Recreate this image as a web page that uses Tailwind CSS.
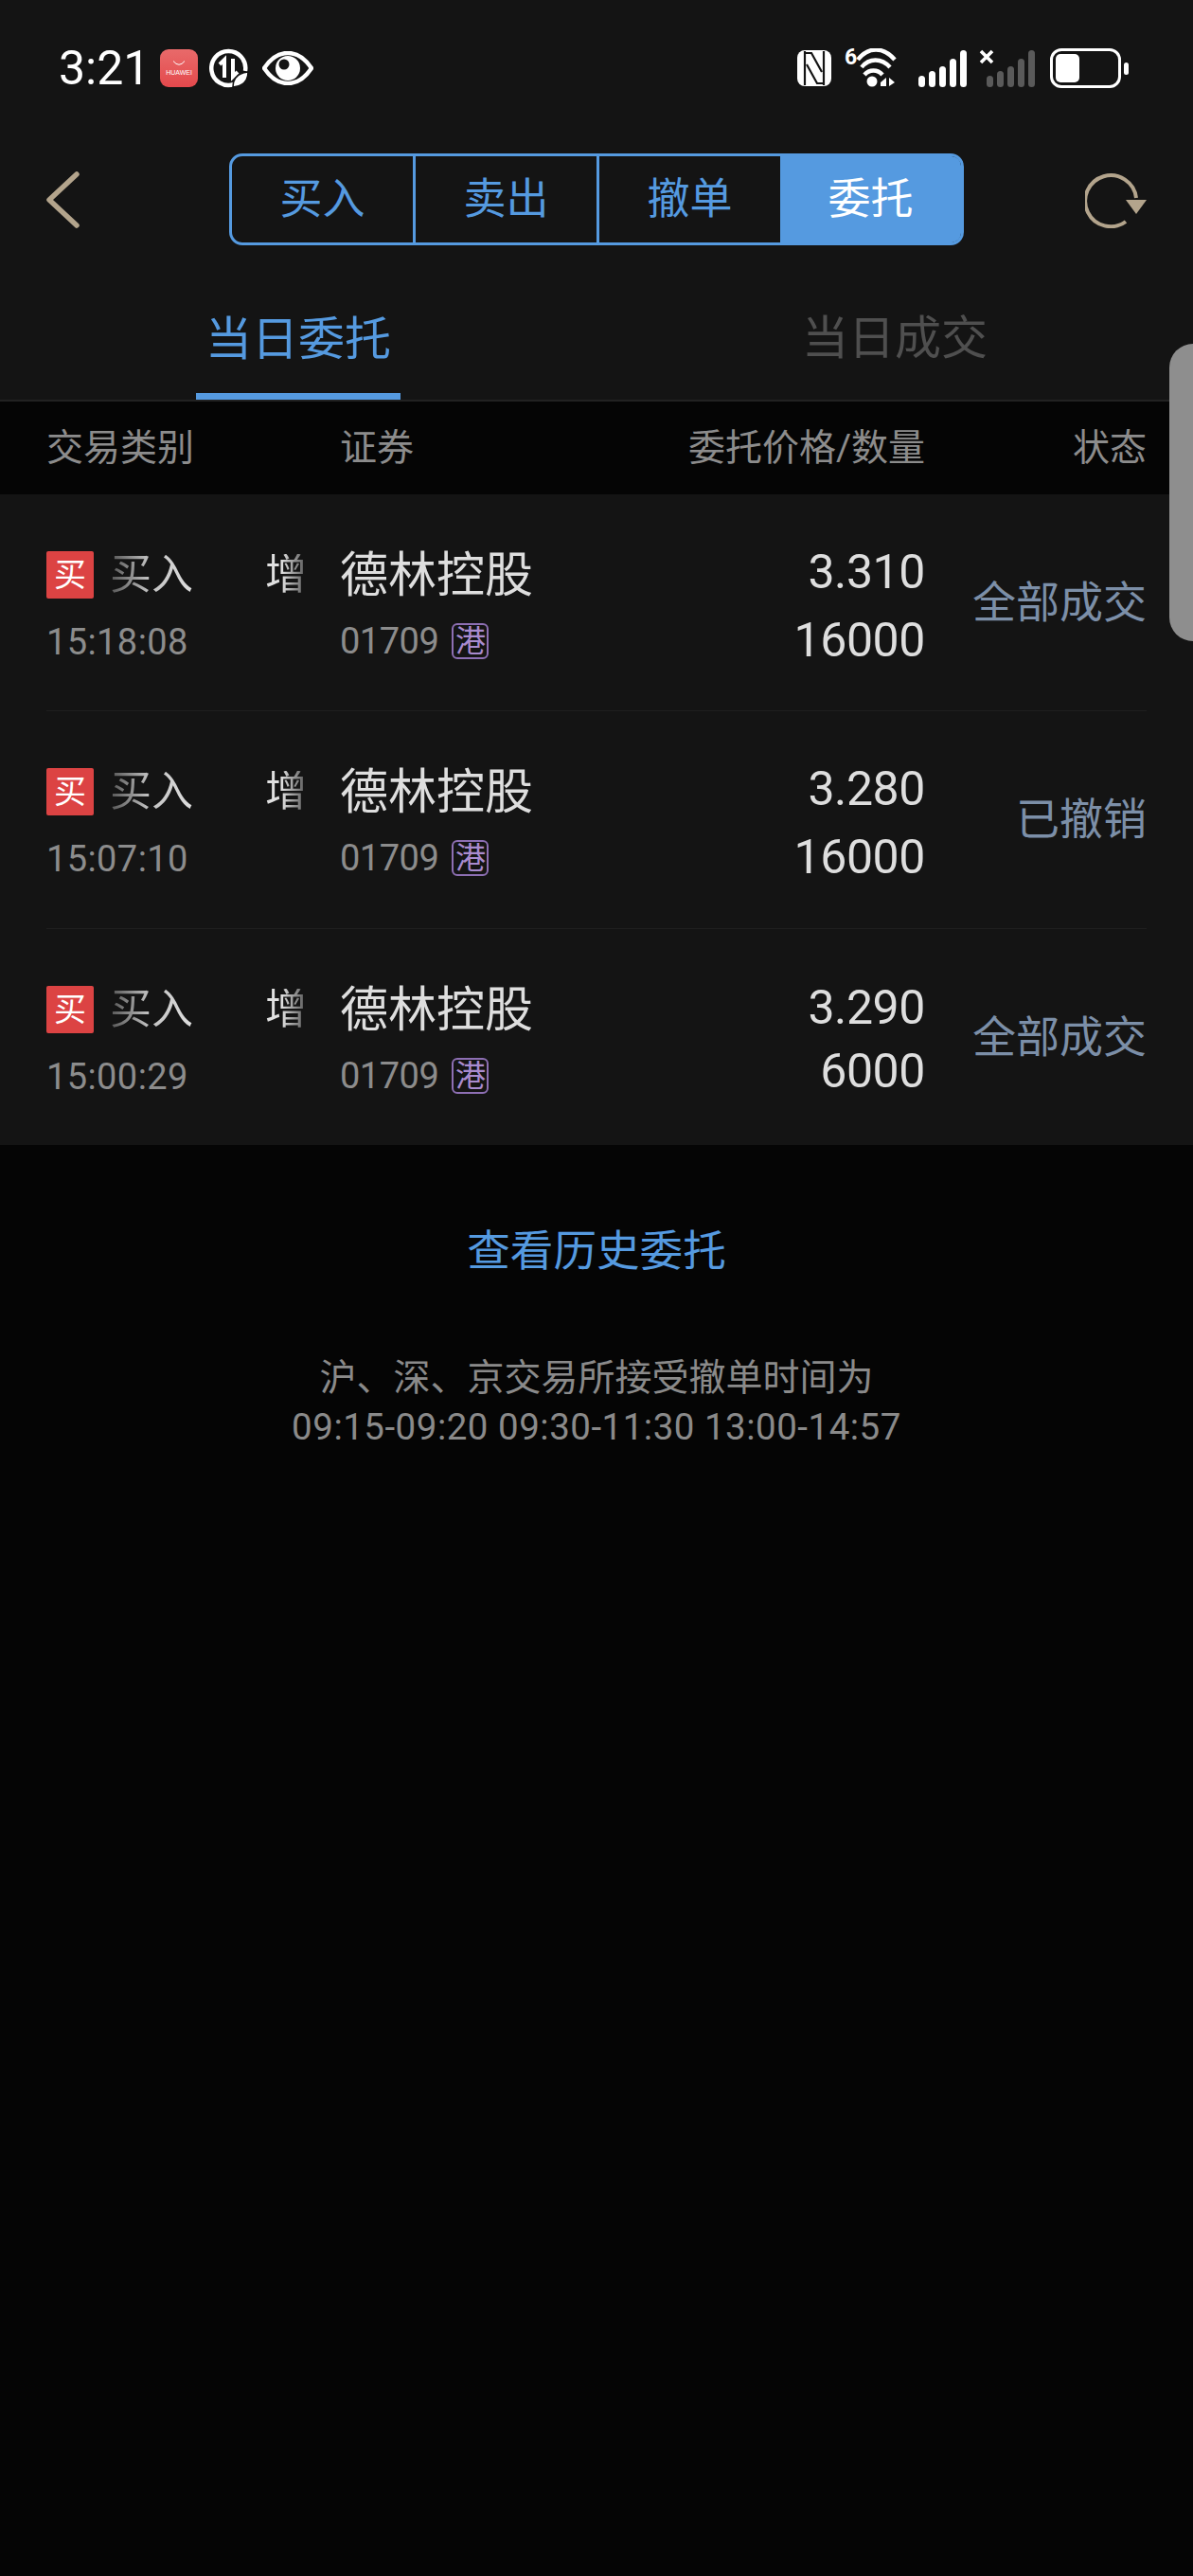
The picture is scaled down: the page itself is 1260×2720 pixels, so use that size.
<!DOCTYPE html>
<html>
  <head>
    <title>委托</title>
    <meta charset="utf-8" />
    <script src="https://cdn.jsdelivr.net/npm/@tailwindcss/browser@4"></script>
  </head>
  <body class="bg-[#050505] font-['Roboto','Noto_Sans_CJK_SC',sans-serif]">
    <div class="relative w-[1260px] h-[2720px] overflow-hidden">
      <!-- status bar -->
      <div class="h-[140px] bg-[#141414] flex items-center justify-between pt-[4px] pl-[62px] pr-[68px] text-white">
        <div class="flex items-center">
          <span class="text-[50px] leading-none w-[91px]">3:21</span>
          <div class="ml-[16px] w-[40px] h-[40px] rounded-[9px] bg-gradient-to-b from-[#e86a6a] to-[#e4484c] flex flex-col items-center justify-center">
            <svg width="14" height="6" viewBox="0 0 14 6" class="mb-[3px]"><path d="M1 0.5 Q7 8 13 0.5" stroke="#fff" stroke-width="1" fill="none"/></svg>
            <span class="text-[7px] leading-none font-['Liberation_Sans']">HUAWEI</span>
          </div>
          <svg class="ml-[12px]" width="42" height="42" viewBox="0 0 42 42" fill="none" stroke="#fff">
            <path d="M26 38 A18 18 0 1 1 38 24" stroke-width="4.5"/>
            <path d="M16 31 V12 L11 17" stroke-width="4"/>
            <path d="M25 11 V30 L30 25" stroke-width="4"/>
            <path d="M25 41 C25 30 32 26 41 25 C41 34 36 40 25 41 Z" fill="#fff" stroke="#141414" stroke-width="1.5"/>
          </svg>
          <svg class="ml-[14px]" width="54" height="36" viewBox="0 0 54 36">
            <path d="M2 18 C10 6 18 2 27 2 C36 2 44 6 52 18 C44 30 36 34 27 34 C18 34 10 30 2 18 Z" fill="none" stroke="#fff" stroke-width="4.5"/>
            <circle cx="27" cy="18" r="13" fill="#fff"/>
            <circle cx="23" cy="14" r="5.5" fill="#141414"/>
          </svg>
        </div>
        <div class="flex items-center">
          <svg width="36" height="38" viewBox="0 0 36 38">
            <rect x="0" y="0" width="36" height="38" rx="8" fill="#fff"/>
            <path d="M8 1 V37 M28 1 V37" stroke="#141414" stroke-width="2.2"/>
            <path d="M8 3 H15 L26 23 M28 35 H21 L10 15" fill="none" stroke="#141414" stroke-width="2.2"/>
          </svg>
          <div class="relative ml-[14px] w-[56px] h-[42px]">
            <span class="absolute left-0 top-0 text-[23px] leading-[20px] font-bold">6</span>
            <svg width="56" height="42" viewBox="0 0 56 42" fill="none" stroke="#fff">
              <path d="M14 12 C25 -2 41 -2 53 12" stroke-width="4.4"/>
              <path d="M18 20 C26 10 39 10 48 20" stroke-width="4.4"/>
              <path d="M21 28 C26 22 35 22 40 28" stroke-width="4.4"/>
              <circle cx="29" cy="35" r="5.5" fill="#fff" stroke="none"/>
              <path d="M38 36 L44 31 V40 H38 Z M47 31 L53 36 L47 40 Z" fill="#fff" stroke="none"/>
            </svg>
          </div>
          <div class="ml-[22px] flex items-end gap-[4px] h-[40px]">
            <div class="w-[7px] h-[12px] rounded-full bg-white"></div>
            <div class="w-[7px] h-[17px] rounded-full bg-white"></div>
            <div class="w-[7px] h-[22px] rounded-full bg-white"></div>
            <div class="w-[7px] h-[30px] rounded-full bg-white"></div>
            <div class="w-[7px] h-[39px] rounded-full bg-white"></div>
          </div>
          <div class="relative ml-[21px] flex items-end gap-[4px] h-[40px]">
            <svg class="absolute left-[-8px] top-[0px]" width="16" height="16" viewBox="0 0 16 16"><path d="M2 2 L14 14 M14 2 L2 14" stroke="#fff" stroke-width="3.6"/></svg>
            <div class="w-[7px] h-[12px] rounded-full bg-[#5a5a5a]"></div>
            <div class="w-[7px] h-[17px] rounded-full bg-[#5a5a5a]"></div>
            <div class="w-[7px] h-[22px] rounded-full bg-[#5a5a5a]"></div>
            <div class="w-[7px] h-[30px] rounded-full bg-[#5a5a5a]"></div>
            <div class="w-[7px] h-[39px] rounded-full bg-[#5a5a5a]"></div>
          </div>
          <div class="ml-[16px] w-[75px] h-[42px] rounded-[12px] border-[3px] border-white p-[3px]">
            <div class="w-[25px] h-full rounded-[5px] bg-white"></div>
          </div>
          <div class="ml-[3px] w-[5px] h-[13px] rounded-full bg-white"></div>
        </div>
      </div>

      <!-- nav: back, segmented control, refresh -->
      <div class="h-[140px] bg-[#141414] flex items-start justify-between px-[48px] pt-[22px]">
        <div class="w-[66px] mt-[19px]">
          <svg width="36" height="60" viewBox="0 0 36 60" fill="none"><path d="M33 3 L4 30 L33 57" stroke="#b3a48c" stroke-width="5.5" stroke-linecap="round" stroke-linejoin="round"/></svg>
        </div>
        <div class="flex w-[776px] h-[97px] rounded-[14px] border-[3px] border-[#559ae0] text-[45px] text-[#559ae0]">
          <div class="flex-1 flex items-center justify-center border-r-[3px] border-[#559ae0]">买入</div>
          <div class="flex-1 flex items-center justify-center border-r-[3px] border-[#559ae0]">卖出</div>
          <div class="flex-1 flex items-center justify-center">撤单</div>
          <div class="flex-1 flex items-center justify-center bg-[#559ae0] text-white rounded-r-[10px]">委托</div>
        </div>
        <svg class="mt-[19px]" width="66" height="60" viewBox="0 0 66 60" fill="none">
          <path d="M43 53 A27 27 0 1 1 54 28" stroke="#b3a48c" stroke-width="4"/>
          <path d="M43 30 H65 L54 45 Z" fill="#b3a48c"/>
        </svg>
      </div>

      <!-- day tabs -->
      <div class="h-[144px] bg-[#141414] flex border-b-[2px] border-[#222222] text-[49px] whitespace-nowrap">
        <div class="relative w-[630px] flex items-center justify-center pt-[14px] text-[#559ae0]">
          <span class="leading-none">当日委托</span>
          <div class="absolute left-[207px] bottom-0 w-[216px] h-[7px] bg-[#559ae0]"></div>
        </div>
        <div class="w-[630px] flex items-center justify-center pt-[14px] text-[#4f4f4f]">当日成交</div>
      </div>

      <!-- column headings -->
      <div class="h-[98px] bg-[#050505] flex items-center justify-between px-[49px] text-[39px] text-[#8c8c8c]">
        <span class="w-[310px]">交易类别</span>
        <span class="w-[200px]">证券</span>
        <span class="w-[418px] text-right whitespace-nowrap">委托价格/数量</span>
        <span class="flex-1 text-right">状态</span>
      </div>

      <!-- orders -->
      <div class="bg-[#141414]">
        <div class="h-[229px] mx-[49px] border-b border-[#1f1f1f] flex">
          <div class="w-[310px] pt-[60px]">
            <div class="flex items-center h-[50px]">
              <div class="w-[50px] h-[50px] rounded-[2px] bg-[#dc4343] text-white text-[34px] flex items-center justify-center">买</div>
              <span class="ml-[17px] w-[89px] text-[44px] leading-none whitespace-nowrap bg-gradient-to-r from-[#555555] via-[#c0c0c0] via-45% to-[#e0e0e0] bg-clip-text text-transparent">买入</span>
              <span class="ml-[75px] w-[44px] text-[44px] leading-none bg-gradient-to-r from-[#e0e0e0] from-40% to-[#555555] bg-clip-text text-transparent">增</span>
            </div>
            <div class="mt-[27px] text-[38px] leading-none tracking-[0.4px] text-[#8c8c8c]">15:18:08</div>
          </div>
          <div class="w-[300px] pt-[60px]">
            <div class="text-[51px] leading-none text-[#dedede]">德林控股</div>
            <div class="mt-[25px] flex items-center text-[38px] leading-none tracking-[-0.5px] text-[#8c8c8c]">
              <span>01709</span>
              <span class="ml-[14px] w-[39px] h-[38px] rounded-[6px] border-2 border-[#8d6fb3] text-[#a98bcf] text-[32px] flex items-center justify-center">港</span>
            </div>
          </div>
          <div class="w-[318px] pt-[57px] text-right text-[50px] leading-none tracking-[-0.4px] text-[#dedede]">
            <div>3.310</div>
            <div class="mt-[22px]">16000</div>
          </div>
          <div class="flex-1 flex items-center justify-end text-[46px] text-[#7c8fa8]">全部成交</div>
        </div>

        <div class="h-[230px] mx-[49px] border-b border-[#1f1f1f] flex">
          <div class="w-[310px] pt-[60px]">
            <div class="flex items-center h-[50px]">
              <div class="w-[50px] h-[50px] rounded-[2px] bg-[#dc4343] text-white text-[34px] flex items-center justify-center">买</div>
              <span class="ml-[17px] w-[89px] text-[44px] leading-none whitespace-nowrap bg-gradient-to-r from-[#555555] via-[#c0c0c0] via-45% to-[#e0e0e0] bg-clip-text text-transparent">买入</span>
              <span class="ml-[75px] w-[44px] text-[44px] leading-none bg-gradient-to-r from-[#e0e0e0] from-40% to-[#555555] bg-clip-text text-transparent">增</span>
            </div>
            <div class="mt-[27px] text-[38px] leading-none tracking-[0.4px] text-[#8c8c8c]">15:07:10</div>
          </div>
          <div class="w-[300px] pt-[60px]">
            <div class="text-[51px] leading-none text-[#dedede]">德林控股</div>
            <div class="mt-[25px] flex items-center text-[38px] leading-none tracking-[-0.5px] text-[#8c8c8c]">
              <span>01709</span>
              <span class="ml-[14px] w-[39px] h-[38px] rounded-[6px] border-2 border-[#8d6fb3] text-[#a98bcf] text-[32px] flex items-center justify-center">港</span>
            </div>
          </div>
          <div class="w-[318px] pt-[57px] text-right text-[50px] leading-none tracking-[-0.4px] text-[#dedede]">
            <div>3.280</div>
            <div class="mt-[22px]">16000</div>
          </div>
          <div class="flex-1 flex items-center justify-end text-[46px] text-[#7c8fa8]">已撤销</div>
        </div>

        <div class="h-[228px] mx-[49px] flex">
          <div class="w-[310px] pt-[60px]">
            <div class="flex items-center h-[50px]">
              <div class="w-[50px] h-[50px] rounded-[2px] bg-[#dc4343] text-white text-[34px] flex items-center justify-center">买</div>
              <span class="ml-[17px] w-[89px] text-[44px] leading-none whitespace-nowrap bg-gradient-to-r from-[#555555] via-[#c0c0c0] via-45% to-[#e0e0e0] bg-clip-text text-transparent">买入</span>
              <span class="ml-[75px] w-[44px] text-[44px] leading-none bg-gradient-to-r from-[#e0e0e0] from-40% to-[#555555] bg-clip-text text-transparent">增</span>
            </div>
            <div class="mt-[27px] text-[38px] leading-none tracking-[0.4px] text-[#8c8c8c]">15:00:29</div>
          </div>
          <div class="w-[300px] pt-[60px]">
            <div class="text-[51px] leading-none text-[#dedede]">德林控股</div>
            <div class="mt-[25px] flex items-center text-[38px] leading-none tracking-[-0.5px] text-[#8c8c8c]">
              <span>01709</span>
              <span class="ml-[14px] w-[39px] h-[38px] rounded-[6px] border-2 border-[#8d6fb3] text-[#a98bcf] text-[32px] flex items-center justify-center">港</span>
            </div>
          </div>
          <div class="w-[318px] pt-[58px] text-right text-[50px] leading-none tracking-[-0.4px] text-[#dedede]">
            <div>3.290</div>
            <div class="mt-[17px]">6000</div>
          </div>
          <div class="flex-1 flex items-center justify-end text-[46px] text-[#7c8fa8]">全部成交</div>
        </div>
      </div>

      <!-- history link and cancel window note -->
      <div class="pt-[86px] text-center">
        <div class="text-[45.6px] leading-[54px] text-[#559ae0]">查看历史委托</div>
        <div class="mt-[80px] text-[39px] leading-[52px] text-[#8a8a8a]">
          <div>沪、深、京交易所接受撤单时间为</div>
          <div class="text-[38.5px] tracking-[0.5px]">09:15-09:20 09:30-11:30 13:00-14:57</div>
        </div>
      </div>

      <!-- edge handle floating over the list -->
      <div class="absolute right-0 top-[363px] w-[25px] h-[314px] rounded-l-[34px] bg-[#8e8e8e]"></div>
    </div>
  </body>
</html>
